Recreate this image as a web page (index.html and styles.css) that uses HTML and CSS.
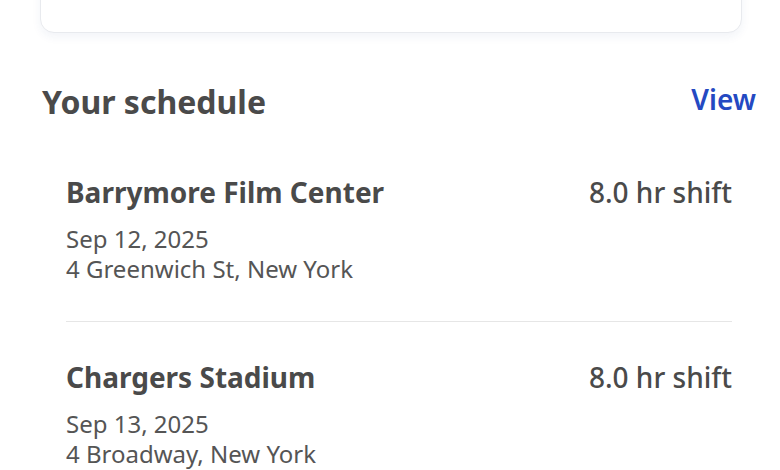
FILE: index.html
```html
<!DOCTYPE html>
<html lang="en">
<head>
    <meta charset="UTF-8">
    <meta name="viewport" content="width=device-width, initial-scale=1.0">
    <title>Your schedule</title>
    <link rel="stylesheet" href="styles.css">
</head>
<body>
    <div class="summary-card"></div>

    <section class="schedule">
        <div class="schedule-header">
            <h2>Your schedule</h2>
            <a class="view-link" href="#">View</a>
        </div>

        <ul class="shift-list">
            <li class="shift">
                <div class="shift-top">
                    <span class="venue">Barrymore Film Center</span>
                    <span class="duration">8.0 hr shift</span>
                </div>
                <div class="shift-date">Sep 12, 2025</div>
                <div class="shift-address">4 Greenwich St, New York</div>
            </li>
            <li class="shift">
                <div class="shift-top">
                    <span class="venue">Chargers Stadium</span>
                    <span class="duration">8.0 hr shift</span>
                </div>
                <div class="shift-date">Sep 13, 2025</div>
                <div class="shift-address">4 Broadway, New York</div>
            </li>
        </ul>
    </section>
</body>
</html>
```

FILE: styles.css
```css
:root {
    --text-dark: #4a4a4a;
    --text-muted: #555;
    --link-color: #2449c2;
    --divider: #e6e6e6;
}

* {
    margin: 0;
    padding: 0;
    box-sizing: border-box;
    font-family: 'Noto Sans', 'Open Sans', sans-serif;
}

body {
    background-color: #fff;
    color: var(--text-dark);
    overflow: hidden;
}

.summary-card {
    height: 100px;
    margin: -67px 38px 0 40px;
    background-color: #fff;
    border: 1px solid #e8eaee;
    border-radius: 14px;
    box-shadow: 0 4px 10px rgba(40, 60, 140, 0.06);
}

.schedule {
    padding: 0 24px 0 42px;
}

.schedule-header {
    display: flex;
    justify-content: space-between;
    align-items: flex-start;
    margin-top: 49px;
}

.schedule-header h2 {
    font-size: 32px;
    font-weight: 700;
    line-height: 40px;
    color: var(--text-dark);
}

.view-link {
    margin-top: -1px;
    font-size: 28px;
    font-weight: 600;
    line-height: 36px;
    color: var(--link-color);
    text-decoration: none;
}

.shift-list {
    list-style: none;
    padding: 0 24px;
    margin-top: 52px;
}

.shift {
    padding: 24px 0 37px;
}

.shift:first-child {
    padding-top: 0;
}

.shift + .shift {
    border-top: 1px solid var(--divider);
    padding-top: 37px;
}

.shift-top {
    display: flex;
    justify-content: space-between;
    align-items: baseline;
    margin-bottom: 14px;
}

.venue {
    font-size: 28px;
    font-weight: 700;
    line-height: 36px;
}

.duration {
    font-size: 28px;
    font-weight: 500;
    line-height: 36px;
}

.shift-date,
.shift-address {
    font-size: 24px;
    line-height: 30px;
    color: var(--text-muted);
}
```
